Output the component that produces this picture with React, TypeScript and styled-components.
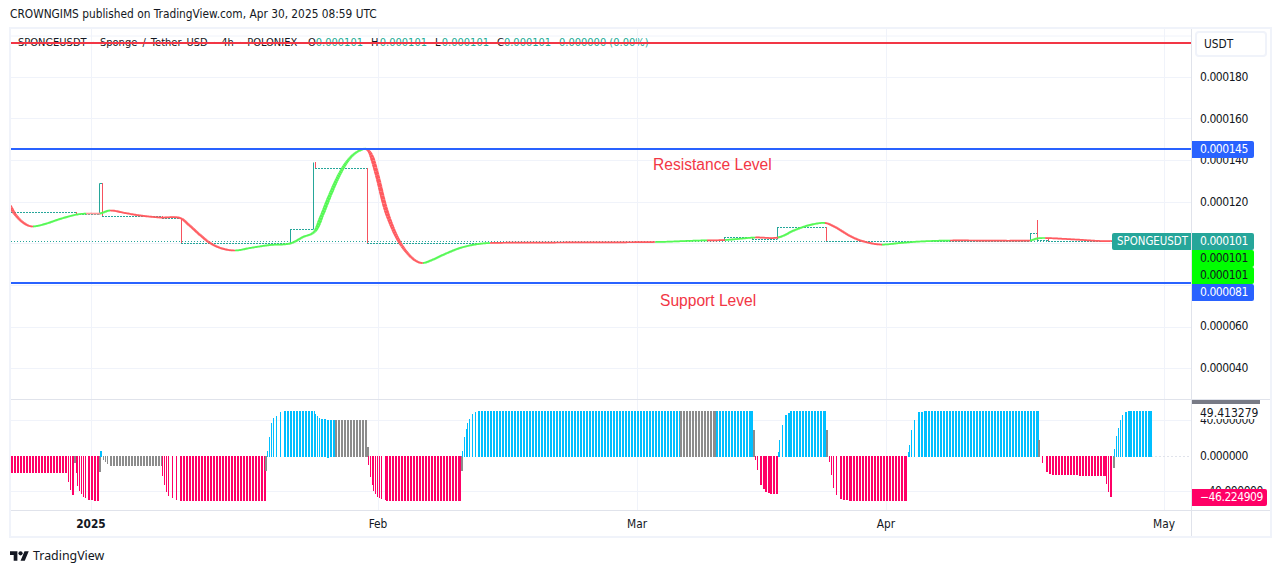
import React from "react";
import styled, { createGlobalStyle } from "styled-components";

const FONT = `"DejaVu Sans Condensed", "DejaVu Sans", sans-serif`;
const RULE = "#e0e3eb";

const Global = createGlobalStyle`
  html, body { margin: 0; padding: 0; background: #fff; overflow: hidden; }
  body { font-family: ${FONT}; color: #131722; }
`;

const Page = styled.div`
  width: 1281px;
  height: 573px;
  display: flex;
  flex-direction: column;
`;
const Published = styled.div`
  height: 27px;
  padding-left: 10px;
  font-size: 11.8px;
  line-height: 28px;
  white-space: nowrap;
`;
const Frame = styled.div`
  margin-left: 9px;
  width: 1263px;
  height: 511px;
  box-sizing: border-box;
  border: 2px solid #f0f3fa;
  display: grid;
  grid-template-columns: 1180px 79px;
  grid-template-rows: 371px 111px 25px;
`;
const Plot = styled.div`
  position: relative;
  overflow: hidden;
  border-bottom: 1px solid ${RULE};
  svg { display: block; position: relative; z-index: 1; }
`;
const Legend = styled.div`
  position: absolute;
  left: 7px;
  top: 7px;
  height: 14px;
  display: flex;
  font-size: 11px;
  line-height: 14px;
  white-space: nowrap;
`;
const LegendName = styled.span`
  width: 290px;
  word-spacing: 2px;
`;
const Ohlc = styled.span<{ $w: number }>`
  width: ${(p) => p.$w}px;
  display: flex;
  justify-content: space-between;
  padding-right: 8px;
  box-sizing: border-box;
`;
const Up = styled.span`
  color: #22ab94;
`;
const Note = styled.div<{ $x: number; $y: number }>`
  position: absolute;
  left: ${(p) => p.$x}px;
  top: ${(p) => p.$y}px;
  z-index: 2;
  font-family: "Liberation Sans", sans-serif;
  font-size: 15.6px;
  line-height: 18px;
  color: #f23645;
  white-space: nowrap;
`;
const Axis = styled.div`
  position: relative;
  overflow: hidden;
  display: flex;
  flex-direction: column;
  border-left: 1px solid ${RULE};
  border-bottom: 1px solid ${RULE};
`;
const ScaleButton = styled.div`
  flex: none;
  margin: 2px 0 0 3px;
  width: 72px;
  height: 26px;
  box-sizing: border-box;
  border: 2px solid #f0f3fa;
  border-radius: 4px;
  padding-left: 7px;
  font-size: 11.8px;
  line-height: 23px;
`;
const Tick = styled.div<{ $h: number }>`
  flex: none;
  height: ${(p) => p.$h}px;
  line-height: ${(p) => p.$h}px;
  padding-left: 8px;
  font-size: 12px;
  letter-spacing: -0.45px;
  white-space: nowrap;
`;
const StudyTicks = styled.div`
  display: flex;
  flex-direction: column;
  padding-top: 3px;
`;
const TagStack = styled.div<{ $y: number }>`
  position: absolute;
  left: 0;
  top: ${(p) => p.$y}px;
  display: flex;
  flex-direction: column;
  z-index: 2;
`;
const Tag = styled.div<{ $w?: number; $bg: string; $fg: string }>`
  width: ${(p) => p.$w ?? 62}px;
  height: 17px;
  box-sizing: border-box;
  padding-left: 8px;
  background: ${(p) => p.$bg};
  color: ${(p) => p.$fg};
  border-radius: 0 2px 2px 0;
  font-size: 12px;
  letter-spacing: -0.45px;
  line-height: 17px;
  white-space: nowrap;
`;
const SymbolTag = styled.div`
  position: absolute;
  right: 0;
  top: 204px;
  width: 79px;
  height: 17px;
  box-sizing: border-box;
  padding-left: 5px;
  background: #26a69a;
  color: #fff;
  border-radius: 2px 0 0 2px;
  font-size: 11.4px;
  line-height: 17px;
  z-index: 2;
`;
const StudyCap = styled.div`
  position: absolute;
  left: 0;
  top: 0;
  width: 68px;
  height: 4px;
  background: #787b86;
  z-index: 3;
`;
const StudyValue = styled.div`
  position: absolute;
  left: 0;
  top: 4px;
  width: 70px;
  height: 15px;
  padding-left: 8px;
  box-sizing: border-box;
  background: #fff;
  font-size: 12px;
  line-height: 18px;
  z-index: 2;
`;
const TimeAxis = styled.div`
  display: flex;
  align-items: center;
  padding-left: 50px;
`;
const TimeLabel = styled.span<{ $gap?: number; $strong?: boolean }>`
  flex: none;
  width: 60px;
  margin-left: ${(p) => p.$gap ?? 0}px;
  text-align: center;
  font-size: 11.8px;
  line-height: 16px;
  font-weight: ${(p) => (p.$strong ? 700 : 400)};
`;
const Corner = styled.div`
  border-left: 1px solid ${RULE};
`;
const Footer = styled.div`
  display: flex;
  align-items: center;
  gap: 4px;
  height: 35px;
  padding-left: 10px;
  font-family: "Noto Sans", sans-serif;
  font-size: 12.4px;
  svg { display: block; }
`;

const VERT = [91, 378, 637, 886, 1164];
const MAIN_GRID = [36, 77.5, 118.5, 160.5, 202.5, 243.5, 285.5, 327.5, 368.5];
const SUB_GRID = [420.5, 491.5];

type P = [number, number];

const CURVE: P[] = [
  [10, 206], [14, 213], [20, 220], [27, 225], [33, 226.5], [45, 224], [60, 219], [77, 214.5], [90, 213.5], [100, 213.5],
  [110, 210.5], [125, 213], [140, 215.5], [160, 217.5], [180, 218], [190, 226], [200, 235], [210, 243], [222, 248.5], [235, 250.5],
  [250, 248], [270, 245], [290, 243.5], [303, 237], [315, 231], [322, 215], [330, 195], [338, 177], [346, 163], [354, 154],
  [361, 150], [366, 149], [371, 155], [377, 175], [385, 207], [393, 229], [400, 243], [408, 254], [416, 261], [423, 263],
  [432, 260], [445, 254], [460, 248], [475, 244.5], [490, 243], [560, 242.5], [655, 242], [700, 240.5], [725, 240], [755, 237.5],
  [778, 237.5], [795, 230], [810, 225], [825, 223], [835, 227], [850, 236], [862, 241], [880, 244.5], [900, 243], [920, 241.5],
  [950, 240.5], [1030, 240.5], [1037, 238.5], [1045, 238], [1075, 239.5], [1100, 241], [1112, 241],
];
const GREEN = "#55f855";
const RED = "#ff5a5f";
const RANGES: [number, number, string][] = [
  [10, 33, RED], [33, 86, GREEN], [86, 100, "#ff9a9a"], [100, 110, GREEN], [110, 235, RED], [235, 366, GREEN], [366, 423, RED],
  [423, 490, GREEN], [490, 655, RED], [655, 707, GREEN], [707, 725, RED], [725, 755, GREEN], [755, 778, RED], [778, 825, GREEN],
  [825, 882, RED], [882, 950, GREEN], [950, 1030, RED], [1030, 1045, GREEN], [1045, 1112, RED],
];

function curveY(x: number): number {
  for (let i = 0; i < CURVE.length - 1; i++) {
    const [x0, y0] = CURVE[i];
    const [x1, y1] = CURVE[i + 1];
    if (x >= x0 && x <= x1) {
      const pr = CURVE[Math.max(i - 1, 0)];
      const nx = CURVE[Math.min(i + 2, CURVE.length - 1)];
      const m0 = (y1 - pr[1]) / (x1 - pr[0]);
      const m1 = (nx[1] - y0) / (nx[0] - x0);
      const h = x1 - x0;
      const t = (x - x0) / h;
      const t2 = t * t;
      const t3 = t2 * t;
      return (2 * t3 - 3 * t2 + 1) * y0 + (t3 - 2 * t2 + t) * h * m0 + (-2 * t3 + 3 * t2) * y1 + (t3 - t2) * h * m1;
    }
  }
  return 241;
}
function rangeColor(x: number) {
  return RANGES.find((r) => x >= r[0] && x < r[1])?.[2] ?? RED;
}

function Curve() {
  const pieces = [];
  for (let x = 10; x < 1112; x += 1) {
    const a = curveY(x);
    const b = curveY(x + 1);
    const w = Math.min(4.4, 1.7 + Math.abs(b - a) * 0.9);
    pieces.push(
      <line key={x} x1={x} y1={a} x2={x + 1.2} y2={b} stroke={rangeColor(x)} strokeWidth={w} strokeLinecap="butt" />
    );
  }
  return <g>{pieces}</g>;
}

const TEAL = "#26a69a";
const SRED = "#f7525f";
const STEPS: [number, number, number, number, string, boolean][] = [
  [11, 212.5, 76, 212.5, TEAL, true], [76.5, 212, 76.5, 215, SRED, false], [76, 214.5, 100, 214.5, TEAL, true],
  [99.5, 183.5, 99.5, 214.5, TEAL, false], [99.5, 183.5, 102, 183.5, TEAL, false], [102.5, 183, 102.5, 216.5, SRED, false],
  [102, 216.5, 162, 216.5, TEAL, true], [162.5, 216, 162.5, 218.5, SRED, false], [162, 218.5, 181, 218.5, TEAL, true],
  [181.5, 218, 181.5, 243.5, SRED, false], [181, 243.5, 290, 243.5, TEAL, true], [290.5, 243.5, 290.5, 229.5, TEAL, false],
  [290, 229.5, 314, 229.5, TEAL, true], [313.5, 229.5, 313.5, 162.5, TEAL, false], [315.5, 162, 315.5, 168.5, SRED, false],
  [315, 168.5, 367, 168.5, TEAL, true], [367.5, 168, 367.5, 243.5, SRED, false], [367, 243.5, 490, 243.5, TEAL, true],
  [724.5, 241, 724.5, 237.5, TEAL, false], [724, 237.5, 752, 237.5, TEAL, true], [752.5, 237, 752.5, 239.5, SRED, false],
  [752, 239.5, 777, 239.5, TEAL, true], [777.5, 239.5, 777.5, 227.5, TEAL, false], [777, 227.5, 826, 227.5, TEAL, true],
  [826.5, 227, 826.5, 241.5, SRED, false], [826, 241.5, 1030, 241.5, TEAL, true], [1030.5, 241.5, 1030.5, 233.5, TEAL, false],
  [1030, 233.5, 1037, 233.5, TEAL, true], [1037.5, 220, 1037.5, 240, SRED, false], [1037, 240.5, 1048, 240.5, TEAL, true],
  [1048.5, 238, 1048.5, 241, SRED, false], [1048, 241.5, 1112, 241.5, TEAL, true],
];

const PINK = "#ff0066";
const BLUE = "#00bfff";
const GRAY = "#8c8c8c";
const ZERO = 456;
// each block: colour, then [x, y] key points; y is the far end of the bars
const BLOCKS: [string, P[]][] = [
  [PINK, [[11, 473], [66, 473], [68, 482], [70, 490], [72, 495]]],
  [GRAY, [[74, 463]]],
  [PINK, [[76, 473], [77, 486], [79, 491], [81, 494], [83, 497], [85, 498], [88, 500], [97, 501]]],
  [GRAY, [[99, 472]]],
  [BLUE, [[100, 451]]],
  [GRAY, [[103, 460], [105, 462], [107, 464], [110, 466], [161, 466]]],
  [PINK, [[162, 476], [164, 485], [166, 492], [168, 496], [172, 498], [176, 500], [180, 501], [264, 501]]],
  [GRAY, [[265, 471]]],
  [BLUE, [[267, 451], [269, 437], [271, 423], [273, 418], [276, 416], [280, 412], [284, 411], [314, 411], [315, 414], [317, 416], [319, 418], [321, 419], [333, 420]]],
  [GRAY, [[335, 420], [365, 420]]],
  [GRAY, [[367, 447]]],
  [PINK, [[368, 465], [370, 477], [372, 485], [373, 491], [375, 494], [377, 497], [379, 498], [381, 499], [385, 500], [386, 501], [459, 501]]],
  [GRAY, [[461, 471]]],
  [BLUE, [[462, 451], [464, 437], [466, 429], [467, 423], [469, 419], [472, 414], [475, 412], [478, 411], [679, 411]]],
  [GRAY, [[680, 411], [714, 411]]],
  [BLUE, [[716, 411], [751, 411]]],
  [GRAY, [[753, 430]]],
  [PINK, [[755, 460], [757, 470], [760, 485], [765, 492], [770, 494], [776, 494]]],
  [BLUE, [[778, 452], [779, 440], [782, 425], [785, 415], [790, 411], [824, 411]]],
  [GRAY, [[826, 430]]],
  [PINK, [[829, 462], [831, 475], [833, 488], [836, 495], [840, 499], [850, 501], [905, 501]]],
  [BLUE, [[908, 452], [909, 445], [911, 430], [914, 420], [918, 412], [925, 411], [1037, 411]]],
  [GRAY, [[1038, 440]]],
  [PINK, [[1042, 463], [1046, 472], [1052, 475], [1105, 476], [1106, 484], [1108, 492], [1110, 497]]],
  [GRAY, [[1113, 468]]],
  [BLUE, [[1114, 449], [1116, 436], [1118, 428], [1120, 420], [1122, 415], [1125, 412], [1130, 411], [1150, 411]]],
];

function Bar({ x, y, color, w }: { x: number; y: number; color: string; w: number }) {
  const top = y < ZERO ? y : ZERO;
  const bottom = y < ZERO ? ZERO + 1 : y;
  return <rect x={x} y={Math.round(top)} width={w} height={Math.round(bottom - top)} fill={color} />;
}

function Histogram() {
  const bars: React.ReactNode[] = [];
  BLOCKS.forEach(([color, pts], b) => {
    pts.forEach(([x, y], i) => {
      const next = pts[i + 1];
      const tight = next && next[0] - x < 5;
      bars.push(<Bar key={`${b}-${i}`} x={x} y={y} color={color} w={tight ? 1 : 2} />);
      if (next && next[0] - x >= 5) {
        for (let nx = x + 3; nx < next[0]; nx += 3) {
          const yy = y + ((next[1] - y) * (nx - x)) / (next[0] - x);
          bars.push(<Bar key={`${b}-${i}-${nx}`} x={nx} y={yy} color={color} w={2} />);
        }
      }
    });
  });
  return <g shapeRendering="crispEdges">{bars}</g>;
}

function Logo() {
  return (
    <svg width="19" height="10" viewBox="0 4 36 18" fill="#131722">
      <path d="M14 22H7V11H0V4h14v18zM28 22h-8l7.5-18h8L28 22z" />
      <circle cx="20" cy="8" r="4" />
    </svg>
  );
}

const GRID = "#f0f3fa";

function OhlcItem({ k, v, w }: { k: string; v: string; w: number }) {
  return (
    <Ohlc $w={w}>
      <span>{k}</span>
      <Up>{v}</Up>
    </Ohlc>
  );
}

export default function App() {
  return (
    <Page>
      <Global />
      <Published>CROWNGIMS published on TradingView.com, Apr 30, 2025 08:59 UTC</Published>
      <Frame>
        <Plot>
          <Legend>
            <LegendName>SPONGEUSDT · Sponge / Tether USD · 4h · POLONIEX</LegendName>
            <OhlcItem k="O" v="0.000101" w={63} />
            <OhlcItem k="H" v="0.000101" w={64} />
            <OhlcItem k="L" v="0.000101" w={62} />
            <OhlcItem k="C" v="0.000101" w={62} />
            <Up>0.000000 (0.00%)</Up>
          </Legend>
          <Note $x={642} $y={127}>Resistance Level</Note>
          <Note $x={649} $y={263}>Support Level</Note>
          <svg width="1180" height="370" viewBox="11 29 1180 370">
            <g stroke={GRID} strokeWidth="1">
              {MAIN_GRID.map((y) => <line key={y} x1="11" x2="1191" y1={y} y2={y} />)}
              {VERT.map((x) => <line key={x} x1={x + 0.5} x2={x + 0.5} y1="29" y2="399" />)}
            </g>
            <line x1="11" x2="1112" y1="241.5" y2="241.5" stroke={TEAL} strokeWidth="1" strokeDasharray="1 2" />
            {STEPS.map(([x1, y1, x2, y2, c, dashed], i) => (
              <line key={i} x1={x1} y1={y1} x2={x2} y2={y2} stroke={c} strokeWidth="1" strokeDasharray={dashed ? "2 1" : undefined} />
            ))}
            <Curve />
            <line x1="11" x2="1191" y1="43" y2="43" stroke="#f23645" strokeWidth="2" />
            <line x1="11" x2="1191" y1="149" y2="149" stroke="#2962ff" strokeWidth="2" />
            <line x1="11" x2="1191" y1="283" y2="283" stroke="#2962ff" strokeWidth="2" />
          </svg>
          <SymbolTag>SPONGEUSDT</SymbolTag>
        </Plot>
        <Axis>
          <ScaleButton>USDT</ScaleButton>
          <Tick $h={41.5}>0.000180</Tick>
          <Tick $h={41.5}>0.000160</Tick>
          <Tick $h={41.5}>0.000140</Tick>
          <Tick $h={41.5}>0.000120</Tick>
          <Tick $h={41.5} />
          <Tick $h={41.5} />
          <Tick $h={41.5}>0.000060</Tick>
          <Tick $h={41.5}>0.000040</Tick>
          <TagStack $y={112}>
            <Tag $bg="#2962ff" $fg="#fff">0.000145</Tag>
          </TagStack>
          <TagStack $y={204}>
            <Tag $bg="#26a69a" $fg="#fff">0.000101</Tag>
            <Tag $bg="#00ff00" $fg="#131722">0.000101</Tag>
            <Tag $bg="#00ff00" $fg="#131722">0.000101</Tag>
            <Tag $bg="#2962ff" $fg="#fff">0.000081</Tag>
          </TagStack>
        </Axis>
        <Plot>
          <svg width="1180" height="110" viewBox="11 400 1180 110">
            <g stroke={GRID} strokeWidth="1">
              {SUB_GRID.map((y) => <line key={y} x1="11" x2="1191" y1={y} y2={y} />)}
              {VERT.map((x) => <line key={x} x1={x + 0.5} x2={x + 0.5} y1="400" y2="510" />)}
            </g>
            <line x1="1151" x2="1191" y1="456.5" y2="456.5" stroke={RULE} strokeWidth="1" strokeDasharray="2 2" />
            <Histogram />
          </svg>
        </Plot>
        <Axis>
          <StudyCap />
          <StudyValue>49.413279</StudyValue>
          <StudyTicks>
            <Tick $h={35.5}>40.000000</Tick>
            <Tick $h={35.5}>0.000000</Tick>
            <Tick $h={35.5}>−40.000000</Tick>
          </StudyTicks>
          <TagStack $y={89}>
            <Tag $w={75} $bg="#ff0066" $fg="#fff">−46.224909</Tag>
          </TagStack>
        </Axis>
        <TimeAxis>
          <TimeLabel $strong>2025</TimeLabel>
          <TimeLabel $gap={227}>Feb</TimeLabel>
          <TimeLabel $gap={199}>Mar</TimeLabel>
          <TimeLabel $gap={189}>Apr</TimeLabel>
          <TimeLabel $gap={218}>May</TimeLabel>
        </TimeAxis>
        <Corner />
      </Frame>
      <Footer>
        <Logo />
        TradingView
      </Footer>
    </Page>
  );
}
